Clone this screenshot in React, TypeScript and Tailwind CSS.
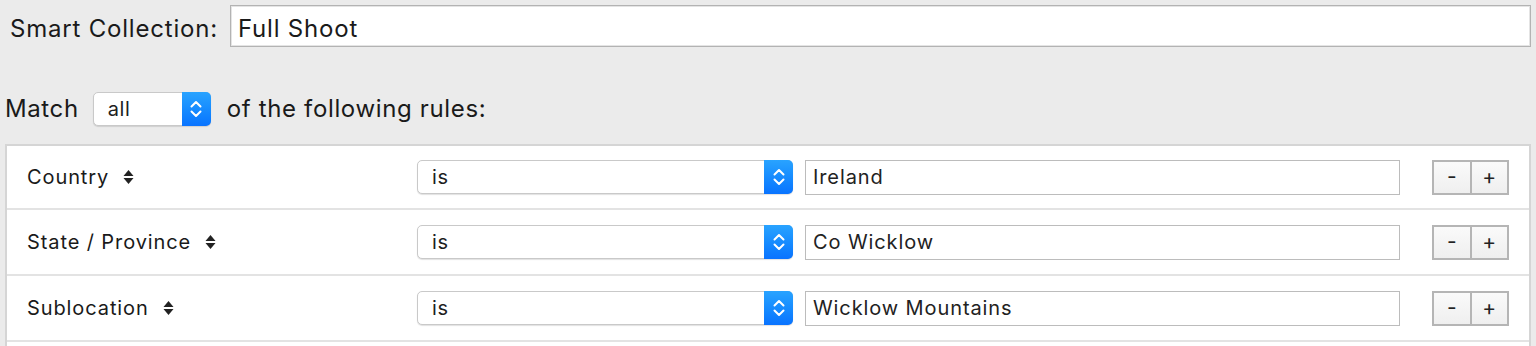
const font = { fontFamily: 'Inter, "Liberation Sans", sans-serif' };

type Rule = { field: string; op: string; value: string };

const rules: Rule[] = [
    { field: 'Country', op: 'is', value: 'Ireland' },
    { field: 'State / Province', op: 'is', value: 'Co Wicklow' },
    { field: 'Sublocation', op: 'is', value: 'Wicklow Mountains' },
];

function Chevrons() {
    return (
        <svg width="14" height="22" viewBox="0 0 14 22" fill="none" stroke="white" strokeWidth="2" strokeLinecap="round" strokeLinejoin="round">
            <path d="M2.5 8.5 L7 4 L11.5 8.5" />
            <path d="M2.5 13.5 L7 18 L11.5 13.5" />
        </svg>
    );
}

function SortArrows() {
    return (
        <svg width="11" height="18" viewBox="0 0 11 18" className="ml-[14px]">
            <path d="M0.5 8 L5.5 2 L10.5 8 Z" fill="#222" />
            <path d="M0.5 10 L5.5 16 L10.5 10 Z" fill="#222" />
        </svg>
    );
}

function Popup({ label, width }: { label: string; width: string }) {
    return (
        <div className={`flex h-[34px] ${width} items-stretch rounded-[5px] border border-[#c9c9c9] bg-white shadow-[0_1px_1px_rgba(0,0,0,0.12)]`}>
            <span className="flex flex-1 items-center pl-[14px] text-[20px] tracking-[0.6px] text-[#1e1e1e]">{label}</span>
            <span className="-my-px -mr-px flex w-[29px] items-center justify-center rounded-r-[5px] bg-gradient-to-b from-[#29a3ff] to-[#0a73ff]">
                <Chevrons />
            </span>
        </div>
    );
}

export default function App() {
    return (
        <div className="h-[346px] w-[1536px] overflow-hidden bg-[#ebebeb] text-[#1a1a1a]" style={font}>
            <div className="flex items-center pl-[10px] pr-[5px] pt-[5px]">
                <span className="pt-[6px] text-[24px] tracking-[0.8px]">Smart Collection:</span>
                <div className="ml-[12px] flex h-[42px] flex-1 items-center border border-[#b3b3b3] bg-white pl-[7px] pt-[6px] text-[24px] tracking-[0.8px] shadow-[inset_0_0_0_1px_#e4e4e4]">
                    Full Shoot
                </div>
            </div>

            <div className="mt-[44px] flex items-center pl-[5px]">
                <span className="text-[24px] tracking-[0.6px]">Match</span>
                <div className="ml-[14px]">
                    <Popup label="all" width="w-[118px]" />
                </div>
                <span className="ml-[16px] text-[24px] tracking-[0.65px]">of the following rules:</span>
            </div>

            <div className="mx-[5px] mt-[17px] h-[220px] border-2 border-[#d5d5d5] bg-white">
                {rules.map((r, i) => (
                    <div
                        key={r.field}
                        className={`grid grid-cols-[378px_376px_595px_77px] items-center gap-x-[12px] border-b-2 border-[#e3e3e3] pl-[20px] ${i === 0 ? 'h-[64px]' : 'h-[66px]'}`}
                    >
                        <div className="flex items-center text-[20px] tracking-[0.9px]">
                            {r.field}
                            <SortArrows />
                        </div>
                        <Popup label={r.op} width="w-[376px]" />
                        <div className="flex h-[35px] w-[595px] items-center border border-[#bcbcbc] pl-[7px] text-[20px] tracking-[0.9px] text-[#222]">
                            {r.value}
                        </div>
                        <div className="ml-[20px] flex h-[35px] w-[77px] border-2 border-[#b5b5b5] bg-gradient-to-b from-[#fafafa] to-[#efefef] text-[21px] text-[#222]">
                            <span className="flex flex-1 items-center justify-center border-r-2 border-[#b5b5b5]">-</span>
                            <span className="flex flex-1 items-center justify-center">+</span>
                        </div>
                    </div>
                ))}
            </div>
        </div>
    );
}
